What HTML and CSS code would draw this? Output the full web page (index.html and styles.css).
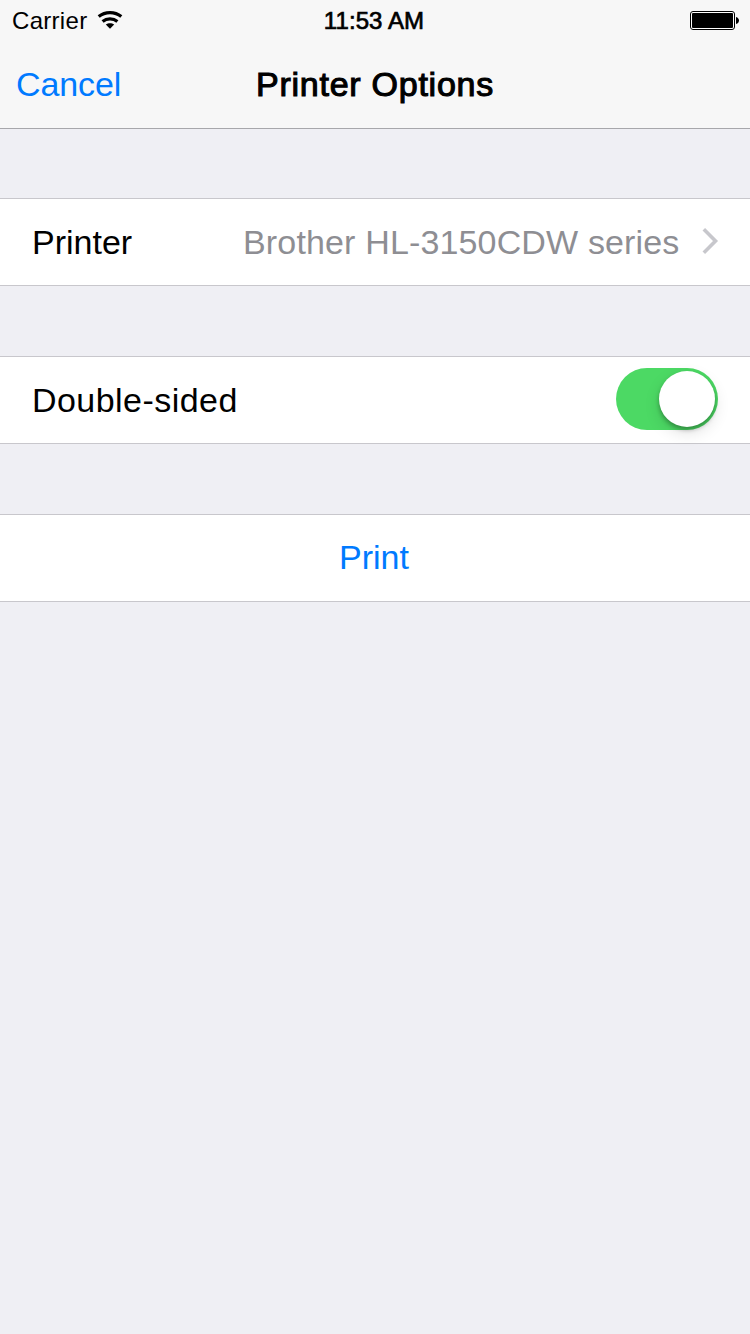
FILE: index.html
```html
<!DOCTYPE html>
<html lang="en">
<head>
<meta charset="utf-8">
<title>Printer Options</title>
<link rel="stylesheet" href="styles.css">
</head>
<body>
<header class="top">
  <div class="status">
    <div class="status-left">
      <span class="carrier">Carrier</span>
      <svg class="wifi" width="26" height="20" viewBox="0 0 26 20">
        <path d="M1.7 6.6C8.2 1.2 17.8 1.2 24.3 6.6M5.6 11.4C9.8 7.9 16.2 7.9 20.4 11.4" fill="none" stroke="#000" stroke-width="3.2"/>
        <path d="M8.8 14.6c2.4-1.9 6-1.9 8.4 0L13 18.8z"/>
      </svg>
    </div>
    <span class="time">11:53 AM</span>
    <svg class="battery" width="50" height="20" viewBox="0 0 50 20">
      <rect x=".5" y=".5" width="44" height="18" rx="2.5" fill="#fff" stroke="#000"/>
      <rect x="2" y="2" width="41" height="15" rx="1"/>
      <path d="M46 6c4 1 4 6 0 7z"/>
    </svg>
  </div>
  <nav class="nav">
    <a class="cancel">Cancel</a>
    <h1 class="title">Printer Options</h1>
    <span></span>
  </nav>
</header>
<main class="groups">
  <div class="row">
    <span class="label">Printer</span>
    <span class="value">Brother HL-3150CDW series</span>
    <svg class="chevron" width="17" height="28" viewBox="0 0 17 28">
      <path d="M1.8 2.3L13.5 14L1.8 25.7" fill="none" stroke="#c7c7cc" stroke-width="3.6"/>
    </svg>
  </div>
  <div class="row">
    <span class="label double">Double-sided</span>
    <div class="switch"><div class="knob"></div></div>
  </div>
  <div class="row action"><span class="print">Print</span></div>
</main>
</body>
</html>
```
FILE: styles.css
```css
* { box-sizing: border-box; }
body {
  margin: 0;
  min-height: 1334px;
  background: #efeff4;
  color: #000;
  font: 34px/40px "Liberation Sans", Arial, sans-serif;
  white-space: nowrap;
}
.top { height: 129px; background: #f7f7f7; border-bottom: 1px solid #a7a7ab; }
.status, .nav {
  display: grid;
  grid-template-columns: 1fr auto 1fr;
  align-items: center;
}
.status { height: 40px; padding: 0 10px 0 12px; font-size: 24px; line-height: 38px; }
.status-left { display: flex; align-items: center; gap: 10px; }
.carrier { letter-spacing: .3px; padding-top: 2px; }
.time { -webkit-text-stroke: .7px #000; letter-spacing: .1px; margin-left: -4px; padding-top: 2px; }
.battery { justify-self: end; margin-top: 1px; }
.nav { height: 88px; padding: 0 16px 1px; }
.cancel, .print { color: #007aff; }
.cancel { letter-spacing: -.1px; }
.title { margin: 0; font-size: 34px; font-weight: 400; -webkit-text-stroke: 1.1px #000; letter-spacing: .75px; }
.groups { display: flex; flex-direction: column; gap: 70px; padding-top: 69px; }
.row {
  display: flex;
  align-items: center;
  height: 88px;
  padding: 0 32px;
  background: #fff;
  border: solid #c8c7cc;
  border-width: 1px 0;
}
.label { flex: 1; }
.double { letter-spacing: .45px; }
.value { color: #8e8e93; letter-spacing: .15px; }
.chevron { margin: 0 -1px 2px 22.5px; }
.action { justify-content: center; padding: 0 33px 2px 31px; }
.switch {
  display: flex;
  justify-content: flex-end;
  width: 102px;
  height: 62px;
  margin-bottom: 2px;
  padding: 3px;
  border-radius: 31px;
  background: #4cd964;
}
.knob {
  width: 56px;
  height: 56px;
  border-radius: 50%;
  background: #fff;
  box-shadow: 0 6px 16px rgba(0,0,0,.12), 0 3px 4px rgba(0,0,0,.28);
}
```
